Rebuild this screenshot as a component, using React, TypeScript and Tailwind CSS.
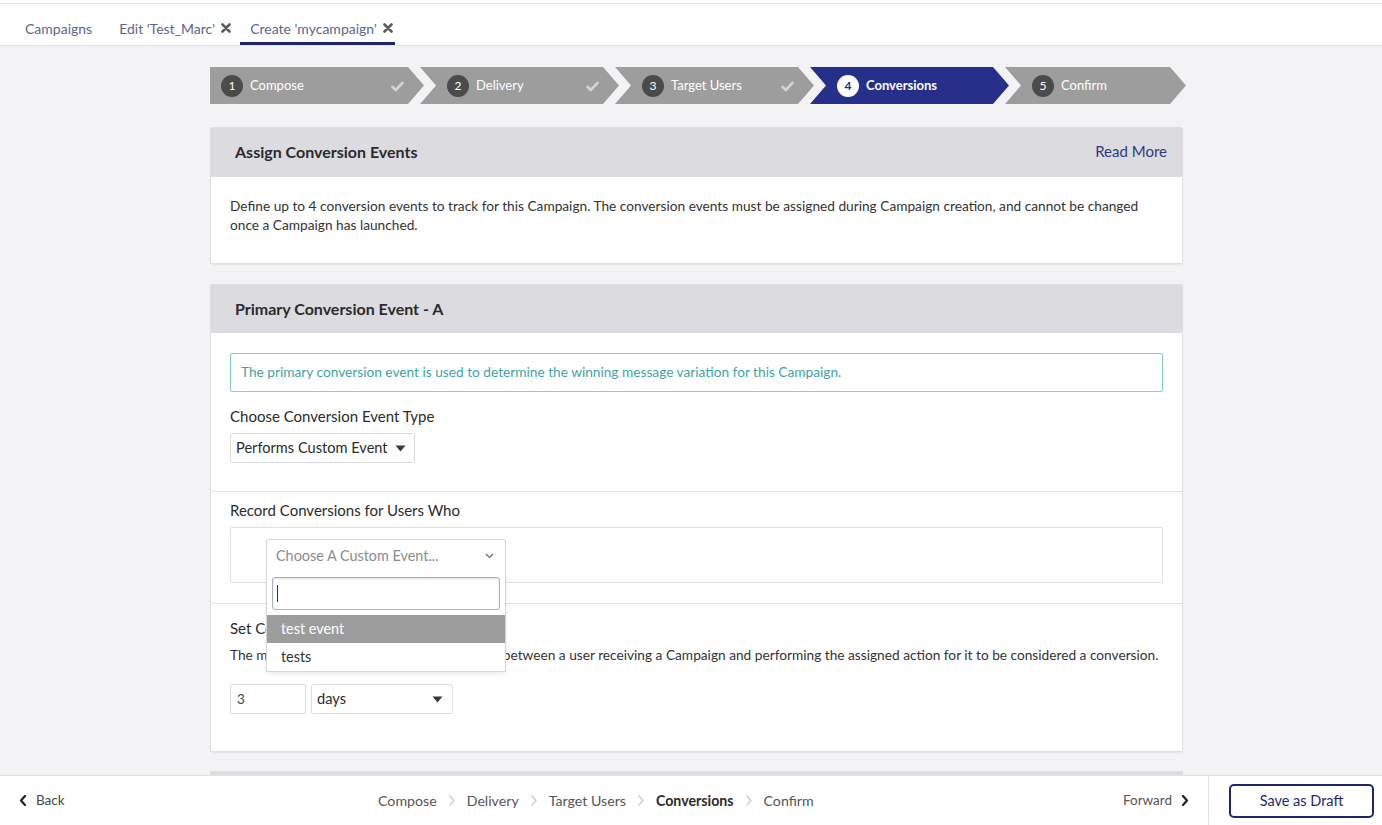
import React from "react";

const FONT = "font-['Lato','Liberation_Sans',sans-serif]";

function XIcon() {
  return (
    <svg width="10" height="10" viewBox="0 0 10 10" className="ml-[6px]">
      <path d="M1.5 1.5 L8.5 8.5 M8.5 1.5 L1.5 8.5" stroke="#5b5b5b" strokeWidth="2.6" strokeLinecap="round" />
    </svg>
  );
}

function Check() {
  return (
    <svg width="13" height="11" viewBox="0 0 13 11">
      <path d="M1.5 5.8 L4.8 9 L11.5 1.8" stroke="#d4d4d4" strokeWidth="2.6" fill="none" strokeLinecap="round" strokeLinejoin="round" />
    </svg>
  );
}

type StepProps = { n: number; label: string; done?: boolean; active?: boolean; first?: boolean; w: string };

function Step({ n, label, done, active, first, w }: StepProps) {
  const clip = first
    ? "[clip-path:polygon(0_0,calc(100%_-_16px)_0,100%_50%,calc(100%_-_16px)_100%,0_100%)]"
    : "[clip-path:polygon(0_0,calc(100%_-_16px)_0,100%_50%,calc(100%_-_16px)_100%,0_100%,16px_50%)]";
  return (
    <div
      className={`${clip} ${w} ${first ? "pl-[11px]" : "pl-[27px] -ml-[4px]"} ${
        active ? "bg-[#26308a]" : "bg-[#9d9d9d]"
      } h-[37px] flex items-center pr-[20px] shrink-0 pt-[1px]`}
    >
      <div
        className={`w-[22px] h-[22px] rounded-full flex items-center justify-center text-[12px] ${
          active ? "bg-white text-[#26308a] font-bold" : "bg-[#4b4b4b] text-white"
        }`}
      >
        {n}
      </div>
      <span className={`ml-[7px] text-[13px] text-white ${active ? "font-bold" : ""}`}>{label}</span>
      {done && (
        <span className="ml-auto">
          <Check />
        </span>
      )}
    </div>
  );
}

function Caret() {
  return (
    <svg width="11" height="7" viewBox="0 0 11 7">
      <path d="M0.5 0.5 L10.5 0.5 L5.5 6.5 Z" fill="#3b3b3b" />
    </svg>
  );
}

function Chev({ dir, color, sw = 1.5 }: { dir: "left" | "right"; color: string; sw?: number }) {
  return (
    <svg width="8" height="11" viewBox="0 0 8 11">
      <path
        d={dir === "left" ? "M6 1 L2 5.5 L6 10" : "M2 1 L6 5.5 L2 10"}
        stroke={color}
        strokeWidth={sw}
        fill="none"
        strokeLinecap="round"
        strokeLinejoin="round"
      />
    </svg>
  );
}

export default function App() {
  return (
    <div className={`${FONT} w-[1382px] h-[825px] flex flex-col bg-[#f3f3f6] overflow-hidden`}>
      {/* top strip */}
      <div className="h-[3px] bg-white shrink-0" />
      {/* tabs */}
      <div className="h-[43px] shrink-0 bg-white border-t border-b border-[#e4e4e8] flex items-stretch pl-[25px] text-[14px] text-[#5f6487]">
        <div className="flex items-center pr-[27px] pt-[7px]">Campaigns</div>
        <div className="flex items-center pr-[9px] pt-[7px]">
          Edit 'Test_Marc'
          <XIcon />
        </div>
        <div className="flex items-center pl-[10px] pr-[2px] border-b-[3px] border-[#1d2469] pt-[10px]">
          Create 'mycampaign'
          <XIcon />
        </div>
      </div>

      {/* main */}
      <div className="flex-1 overflow-hidden">
        <div className="ml-[210px] w-[973px] pt-[21px]">
          {/* stepper */}
          <div className="flex">
            <Step n={1} label="Compose" done first w="w-[214px]" />
            <Step n={2} label="Delivery" done w="w-[199px]" />
            <Step n={3} label="Target Users" done w="w-[199px]" />
            <Step n={4} label="Conversions" active w="w-[199px]" />
            <Step n={5} label="Confirm" w="w-[181px]" />
          </div>

          {/* card 1 */}
          <div className="mt-[23px] bg-white border border-[#e0e0e4] rounded-[2px] shadow-[0_1px_2px_rgba(0,0,0,0.06)]">
            <div className="h-[49px] bg-[#dcdce0] flex items-center justify-between px-[24px] pr-[15px] pb-[2px]">
              <span className="text-[16px] font-bold text-[#2b2b2b]">Assign Conversion Events</span>
              <span className="text-[15px] text-[#2f3a7e]">Read More</span>
            </div>
            <div className="px-[19px] pt-[19px] pb-[29px] text-[13.7px] leading-[19px] text-[#333]">
              Define up to 4 conversion events to track for this Campaign. The conversion events must be assigned during Campaign creation, and cannot be changed once a Campaign has launched.
            </div>
          </div>

          {/* card 2 */}
          <div className="mt-[20px] bg-white border border-[#e0e0e4] rounded-[2px] shadow-[0_1px_2px_rgba(0,0,0,0.06)]">
            <div className="h-[48px] bg-[#dcdce0] flex items-center px-[24px] pb-[1px]">
              <span className="text-[16px] font-bold text-[#2b2b2b]">Primary Conversion Event - A</span>
            </div>
            <div className="px-[19px] pt-[20px] pb-[28px]">
              <div className="h-[39px] border border-[#7fcfcc] rounded-[2px] flex items-center px-[10px] text-[13.7px] text-[#3fa3a2]">
                The primary conversion event is used to determine the winning message variation for this Campaign.
              </div>
              <div className="mt-[14px] text-[15px] leading-[20px] text-[#2b2b2b]">Choose Conversion Event Type</div>
              <div className="mt-[7px] w-[185px] h-[30px] border border-[#dedede] rounded-[2px] flex items-center justify-between pl-[5px] pr-[8px] text-[14.6px] text-[#2b2b2b]">
                Performs Custom Event
                <Caret />
              </div>
            </div>
            <div className="border-t border-[#e2e2e4] px-[19px] pt-[8px] pb-[20px]">
              <div className="text-[15px] leading-[20px] text-[#2b2b2b]">Record Conversions for Users Who</div>
              <div className="mt-[7px] h-[56px] border border-[#e0e0e0] rounded-[2px] pl-[35px] pt-[11px]">
                <div className="relative w-[240px]">
                  <div className="h-[33px] border border-[#d6d6d6] border-b-[#e6e6e6] rounded-t-[3px] bg-white flex items-center justify-between pl-[9px] pr-[11px] text-[14.4px] text-[#8c8c8c]">
                    Choose A Custom Event...
                    <svg width="9" height="6" viewBox="0 0 9 6">
                      <path d="M1 1 L4.5 4.5 L8 1" stroke="#666" strokeWidth="1.2" fill="none" />
                    </svg>
                  </div>
                  <div className="absolute left-0 top-[32px] w-[240px] z-10 bg-white border border-[#d6d6d6] border-t-0 shadow-[0_2px_4px_rgba(0,0,0,0.08)] pt-[6px]">
                    <div className="mx-[5px] h-[33px] border border-[#a8b0bd] rounded-[3px] shadow-[inset_0_1px_2px_rgba(0,0,0,0.12)] flex items-center pl-[4px]">
                      <div className="w-[1px] h-[17px] bg-[#333]" />
                    </div>
                    <div className="mt-[5px] h-[28px] bg-[#9c9c9c] text-white text-[14.4px] flex items-center pl-[14px]">test event</div>
                    <div className="h-[28px] text-[#333] text-[14.4px] flex items-center pl-[14px]">tests</div>
                  </div>
                </div>
              </div>
            </div>
            <div className="border-t border-[#e2e2e4] px-[19px] pt-[14px] pb-[37px]">
              <div className="text-[15px] leading-[20px] text-[#2b2b2b]">Set Conversion Deadline</div>
              <div className="mt-[7px] text-[13.7px] leading-[20px] text-[#333]">
                The maximum length of time that may elapse between a user receiving a Campaign and performing the assigned action for it to be considered a conversion.
              </div>
              <div className="mt-[19px] flex gap-[5px]">
                <div className="w-[76px] h-[30px] border border-[#dedede] rounded-[2px] flex items-center pl-[6px] text-[13.5px] text-[#444]">3</div>
                <div className="w-[142px] h-[30px] border border-[#dedede] rounded-[2px] flex items-center justify-between pl-[5px] pr-[9px] text-[14.6px] text-[#2b2b2b]">
                  days
                  <Caret />
                </div>
              </div>
            </div>
          </div>

          {/* card 3 (partially visible) */}
          <div className="mt-[19px] bg-[#dcdce0] h-[50px] border border-[#e0e0e4]" />
        </div>
      </div>

      {/* footer */}
      <div className="h-[50px] shrink-0 bg-white border-t border-[#e2e2e6] flex items-center relative">
        <div className="flex items-center pl-[19px] text-[13.5px] text-[#444] w-[360px]">
          <Chev dir="left" color="#222" sw={2.2} />
          <span className="ml-[9px]">Back</span>
        </div>
        <div className="flex items-center ml-[18px] text-[14.2px] text-[#555] gap-[11px]">
          <span>Compose</span>
          <Chev dir="right" color="#d0d0d0" />
          <span>Delivery</span>
          <Chev dir="right" color="#d0d0d0" />
          <span>Target Users</span>
          <Chev dir="right" color="#d0d0d0" />
          <span className="font-bold text-[#2b2b2b]">Conversions</span>
          <Chev dir="right" color="#d0d0d0" />
          <span>Confirm</span>
        </div>
        <div className="ml-auto flex items-center text-[13.5px] text-[#555] pr-[19px]">
          <span>Forward</span>
          <span className="ml-[9px]">
            <Chev dir="right" color="#222" sw={2.2} />
          </span>
        </div>
        <div className="h-full border-l border-[#e2e2e6] flex items-center pl-[20px] pr-[8px]">
          <div className="w-[145px] h-[34px] border-[2px] border-[#1f2670] rounded-[5px] flex items-center justify-center text-[14.5px] text-[#1f2670]">
            Save as Draft
          </div>
        </div>
      </div>
    </div>
  );
}
